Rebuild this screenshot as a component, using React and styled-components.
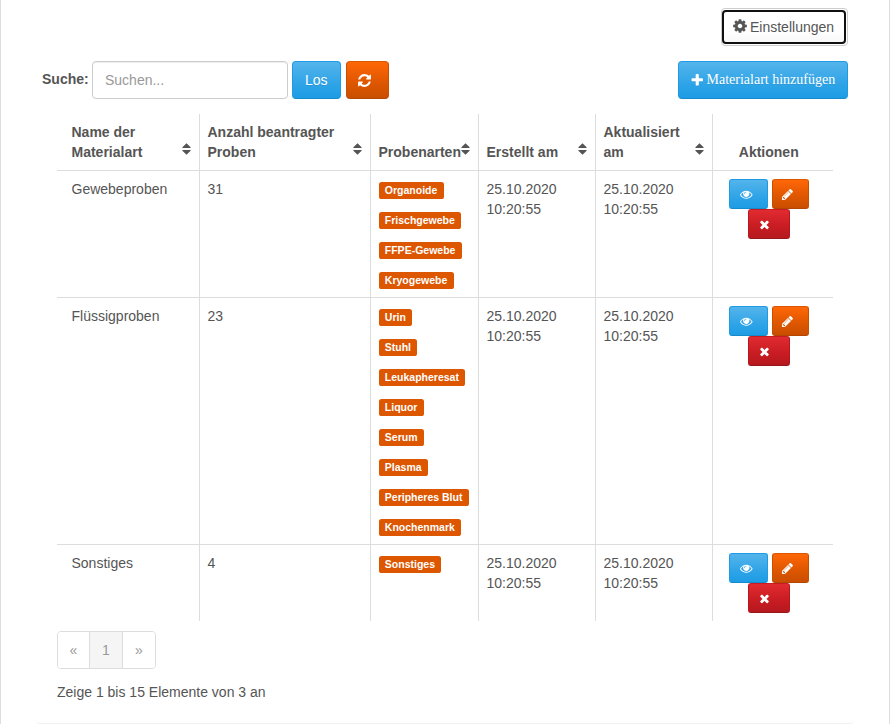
import React from "react";
import styled, { createGlobalStyle, css } from "styled-components";

const Global = createGlobalStyle`
  *, *::before, *::after { box-sizing: border-box; }
  body { margin: 0; background: #fff; color: #555; font: 14px/20px "Liberation Sans", Arial, sans-serif; }
`;

const tones = {
  blue: css`background: linear-gradient(#54b4eb, #2fa4e7 60%, #1d9ce5); border-color: #1d9ce5 #1d9ce5 #178acc;`,
  orange: css`background: linear-gradient(#ff6707, #dd5600 60%, #c94e00); border-color: #dd5600 #c94e00 #b34600;`,
  red: css`background: linear-gradient(#e12b31, #c71c22 60%, #b5191f); border-color: #c71c22 #b5191f #9a151a;`,
};

const Panel = styled.main`
  height: 724px;
  overflow: hidden;
  display: flex;
  flex-direction: column;
  border: solid #ddd;
  border-width: 0 1px;
  padding: 8px 41px 0 35px;
`;
const SettingsRow = styled.div`
  display: flex;
  justify-content: flex-end;
`;
const SettingsButton = styled.button`
  width: 127px;
  height: 38px;
  padding: 1px 1px 1px 0;
  border: 1px solid #ccc;
  border-radius: 4px;
  background: #fff;
  color: #555;
  font: inherit;
`;
const FocusRing = styled.span`
  display: flex;
  align-items: center;
  gap: 2px;
  height: 34px;
  padding-left: 8px;
  border: 2px solid #101010;
  border-radius: 4px;
  background: linear-gradient(#fff 60%, #f8f8f8);
  & > svg { margin-top: -2px; }
`;
const Toolbar = styled.div`
  display: flex;
  align-items: center;
  height: 38px;
  margin: 15px 0;
  padding-left: 6px;
`;
const SearchLabel = styled.label`
  width: 50px;
  font-weight: bold;
  margin-top: -2px;
`;
const SearchInput = styled.input`
  width: 196px;
  height: 38px;
  padding: 8px 12px;
  border: 1px solid #ccc;
  border-radius: 4px;
  box-shadow: inset 0 1px 1px rgba(0, 0, 0, 0.075);
  font: inherit;
  &::placeholder { color: #999; opacity: 1; }
`;
const Button = styled.button`
  display: inline-flex;
  align-items: center;
  width: ${(p) => p.$width}px;
  height: 38px;
  margin-left: ${(p) => p.$gap || 0}px;
  padding: 0 0 0 ${(p) => p.$inset || 12}px;
  gap: 2px;
  border: 1px solid;
  border-radius: 4px;
  color: #fff;
  font: inherit;
  text-shadow: 0 1px 0 rgba(0, 0, 0, 0.1);
  white-space: nowrap;
  ${(p) => tones[p.$tone]}
`;
const AddButton = styled(Button)`
  margin-left: auto;
  font-family: "Liberation Serif", "Times New Roman", serif;
`;
const ActionButton = styled(Button)`
  height: 30px;
  border-radius: 3px;
`;
const Icon = styled.svg`
  display: block;
  flex: none;
  width: ${(p) => p.$size}px;
  height: ${(p) => p.$size}px;
  fill: currentColor;
`;
const Table = styled.table`
  width: 776px;
  margin-left: 21px;
  table-layout: fixed;
  border-collapse: separate;
  border-spacing: 0;
`;
const HeadCell = styled.th`
  height: 57px;
  padding: 8px 8px 8px ${(p) => (p.$first ? 14.5 : 7.5)}px;
  border-right: 1px solid #ddd;
  border-bottom: 1px solid #ddd;
  text-align: left;
  vertical-align: bottom;
  &:last-child { border-right: 0; padding-right: 16px; text-align: center; }
`;
const HeadContent = styled.div`
  display: flex;
  align-items: flex-end;
  justify-content: space-between;
`;
const Cell = styled.td`
  height: ${(p) => p.$height}px;
  padding: 8px 7.5px 0 ${(p) => (p.$first ? 14.5 : 7.5)}px;
  border-right: 1px solid #ddd;
  border-bottom: ${(p) => (p.$last ? "0" : "1px solid #ddd")};
  vertical-align: top;
  &:last-child { border-right: 0; }
`;
const TagList = styled.div`
  display: grid;
  gap: 13px;
  justify-items: start;
  padding-top: 3px;
`;
const Tag = styled.span`
  height: 17px;
  padding: 3px 6.3px 0;
  border-radius: 2.6px;
  background: #dd5600;
  color: #fff;
  font-size: 10.5px;
  font-weight: bold;
  line-height: 10.5px;
  white-space: nowrap;
`;
const Actions = styled.div`
  display: flex;
  flex-wrap: wrap;
  justify-content: center;
  column-gap: 4px;
  width: 96px;
  margin-left: 0.5px;
`;
const Pager = styled.nav`
  display: grid;
  grid-template-columns: 31px 33px 33px;
  flex: none;
  width: 99px;
  height: 38px;
  margin: 10px 0 0 21px;
  border: 1px solid #ddd;
  border-radius: 4px;
  overflow: hidden;
`;
const PageItem = styled.span`
  display: grid;
  place-items: center;
  color: #999;
  background: ${(p) => (p.$active ? "#f5f5f5" : "#fff")};
  & + & { border-left: 1px solid #ddd; }
`;
const Summary = styled.p`
  margin: 13px 0 0 21px;
`;
const PanelEdge = styled.div`
  flex: none;
  height: 6px;
  margin: 16px -6px 0 0;
  border-bottom: 1px solid #f1f1f1;
  border-radius: 0 0 4px 4px;
`;

const icons = {
  cog: "M1152 896q0-106-75-181t-181-75-181 75-75 181 75 181 181 75 181-75 75-181zm512-109v222q0 12-8 23t-20 13l-185 28q-19 54-39 91 35 50 107 138 10 12 10 25t-9 23q-27 37-99 108t-94 71q-12 0-26-9l-138-108q-44 23-91 38-16 136-29 186-7 28-36 28h-222q-14 0-24.5-8.5t-11.5-21.5l-28-184q-49-16-90-37l-141 107q-10 9-25 9-14 0-25-11-126-114-165-168-7-10-7-23 0-12 8-23 15-21 51-66.5t54-70.5q-27-50-41-99l-183-27q-13-2-21-12.5t-8-23.5v-222q0-12 8-23t19-13l186-28q14-46 39-92-40-57-107-138-10-12-10-24 0-10 9-23 26-36 98.5-107.5t94.5-71.5q13 0 26 10l138 107q44-23 91-38 16-136 29-186 7-28 36-28h222q14 0 24.5 8.5t11.5 21.5l28 184q49 16 90 37l142-107q9-9 24-9 13 0 25 10 129 119 165 170 7 8 7 22 0 12-8 23-15 21-51 66.5t-54 70.5q26 50 41 98l183 28q13 2 21 12.5t8 23.5z",
  plus: "M1600 736v192q0 40-28 68t-68 28h-416v416q0 40-28 68t-68 28h-192q-40 0-68-28t-28-68v-416h-416q-40 0-68-28t-28-68v-192q0-40 28-68t68-28h416v-416q0-40 28-68t68-28h192q40 0 68 28t28 68v416h416q40 0 68 28t28 68z",
  refresh: "M1639 1056q0 5-1 7-64 268-268 434.5t-478 166.5q-146 0-282.5-55t-243.5-157l-129 129q-19 19-45 19t-45-19-19-45v-448q0-26 19-45t45-19h448q26 0 45 19t19 45-19 45l-137 137q71 66 161 102t187 36q134 0 250-65t186-179q11-17 53-117 8-23 30-23h192q13 0 22.5 9.5t9.5 22.5zm25-800v448q0 26-19 45t-45 19h-448q-26 0-45-19t-19-45 19-45l138-138q-148-137-349-137-134 0-250 65t-186 179q-11 17-53 117-8 23-30 23h-199q-13 0-22.5-9.5t-9.5-22.5v-7q65-268 270-434.5t480-166.5q146 0 284 55.5t245 156.5l130-129q19-19 45-19t45 19 19 45z",
  eye: "M1664 960q-152-236-381-353 61 104 61 225 0 185-131.5 316.5t-316.5 131.5-316.5-131.5-131.5-316.5q0-121 61-225-229 117-381 353 133 205 333.5 326.5t434.5 121.5 434.5-121.5 333.5-326.5zm-720-384q0-20-14-34t-34-14q-125 0-214.5 89.5t-89.5 214.5q0 20 14 34t34 14 34-14 14-34q0-86 61-147t147-61q20 0 34-14t14-34zm848 384q0 34-20 69-140 230-376.5 368.5t-499.5 138.5-499.5-139-376.5-368q-20-35-20-69t20-69q140-229 376.5-368t499.5-139 499.5 139 376.5 368q20 35 20 69z",
  pencil: "M491 1536l91-91-235-235-91 91v107h128v128h107zm523-928q0-22-22-22-10 0-17 7l-542 542q-7 7-7 17 0 22 22 22 10 0 17-7l542-542q7-7 7-17zm-54-192l416 416-832 832h-416v-416zm683 96q0 53-37 90l-166 166-416-416 166-165q36-38 90-38 53 0 91 38l235 234q37 39 37 91z",
  times: "M1490 1322q0 40-28 68l-136 136q-28 28-68 28t-68-28l-294-294-294 294q-28 28-68 28t-68-28l-136-136q-28-28-28-68t28-68l294-294-294-294q-28-28-28-68t28-68l136-136q28-28 68-28t68 28l294 294 294-294q28-28 68-28t68 28l136 136q28 28 28 68t-28 68l-294 294 294 294q28 28 28 68z",
};

const Glyph = ({ name, size = 14 }) => (
  <Icon $size={size} viewBox="0 0 1792 1792" aria-hidden="true"><path d={icons[name]} /></Icon>
);

const SortIcon = styled.svg`
  display: block;
  flex: none;
  width: 9px;
  height: 12px;
  margin-bottom: 7px;
  fill: #555;
`;
const Sort = () => (
  <SortIcon viewBox="0 0 9 12" aria-hidden="true">
    <path d="M4.5 0.3 8.6 4.2Q9 5 8.2 5H0.8Q0 5 .4 4.2ZM.8 7H8.2Q9 7 8.6 7.8L4.5 11.7 .4 7.8Q0 7 .8 7Z" />
  </SortIcon>
);

const widths = [143, 171, 108, 117, 117, 120];
const heads = [["Name der", "Materialart"], ["Anzahl beantragter", "Proben"], ["Probenarten"], ["Erstellt am"], ["Aktualisiert", "am"]];
const rows = [
  { name: "Gewebeproben", count: 31, height: 127, tags: ["Organoide", "Frischgewebe", "FFPE-Gewebe", "Kryogewebe"] },
  { name: "Flüssigproben", count: 23, height: 247, tags: ["Urin", "Stuhl", "Leukapheresat", "Liquor", "Serum", "Plasma", "Peripheres Blut", "Knochenmark"] },
  { name: "Sonstiges", count: 4, height: 76, tags: ["Sonstiges"] },
];
const Lines = ({ items }) => (
  <span>{items.map((t, i) => <React.Fragment key={t}>{i > 0 && <br />}{t}</React.Fragment>)}</span>
);

export default function App() {
  return (
    <>
      <Global />
      <Panel>
        <SettingsRow>
          <SettingsButton><FocusRing><Glyph name="cog" size={16} />Einstellungen</FocusRing></SettingsButton>
        </SettingsRow>
        <Toolbar>
          <SearchLabel htmlFor="search">Suche:</SearchLabel>
          <SearchInput id="search" placeholder="Suchen..." />
          <Button $tone="blue" $width={49} $gap={4}>Los</Button>
          <Button $tone="orange" $width={43} $gap={5} $inset={10} aria-label="Aktualisieren"><Glyph name="refresh" size={15} /></Button>
          <AddButton $tone="blue" $width={170} $inset={11}><Glyph name="plus" size={14.5} />Materialart hinzufügen</AddButton>
        </Toolbar>
        <Table>
          <colgroup>{widths.map((w, i) => <col key={i} width={w} />)}</colgroup>
          <thead>
            <tr>
              {heads.map((h, i) => (
                <HeadCell key={h[0]} $first={i === 0}>
                  <HeadContent><Lines items={h} /><Sort /></HeadContent>
                </HeadCell>
              ))}
              <HeadCell>Aktionen</HeadCell>
            </tr>
          </thead>
          <tbody>
            {rows.map((r, i) => {
              const cell = { $height: r.height, $last: i === rows.length - 1 };
              return (
                <tr key={r.name}>
                  <Cell {...cell} $first>{r.name}</Cell>
                  <Cell {...cell}>{r.count}</Cell>
                  <Cell {...cell}><TagList>{r.tags.map((t) => <Tag key={t}>{t}</Tag>)}</TagList></Cell>
                  <Cell {...cell}><Lines items={["25.10.2020", "10:20:55"]} /></Cell>
                  <Cell {...cell}><Lines items={["25.10.2020", "10:20:55"]} /></Cell>
                  <Cell {...cell}>
                    <Actions>
                      <ActionButton $tone="blue" $width={39} $inset={10} aria-label="Anzeigen"><Glyph name="eye" size={12.5} /></ActionButton>
                      <ActionButton $tone="orange" $width={37} $inset={8} aria-label="Bearbeiten"><Glyph name="pencil" size={13} /></ActionButton>
                      <ActionButton $tone="red" $width={42} $inset={8.5} aria-label="Löschen"><Glyph name="times" size={13} /></ActionButton>
                    </Actions>
                  </Cell>
                </tr>
              );
            })}
          </tbody>
        </Table>
        <Pager><PageItem>«</PageItem><PageItem $active>1</PageItem><PageItem>»</PageItem></Pager>
        <Summary>Zeige 1 bis 15 Elemente von 3 an</Summary>
        <PanelEdge />
      </Panel>
    </>
  );
}
